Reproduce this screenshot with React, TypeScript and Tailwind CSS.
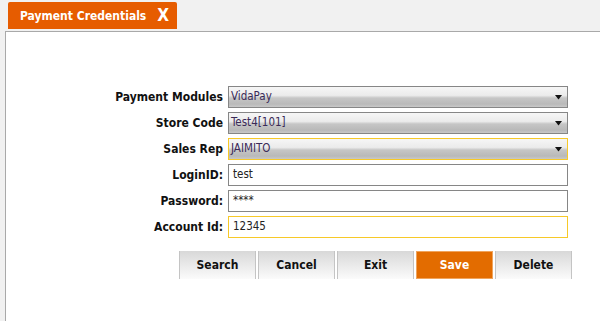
import React from 'react';

const font = { fontFamily: '"DejaVu Sans Condensed", "DejaVu Sans", Verdana, sans-serif' };

type Field = {
  label: string;
  value: string;
  kind: 'select' | 'input';
  active?: boolean;
};

const fields: Field[] = [
  { label: 'Payment Modules', value: 'VidaPay', kind: 'select' },
  { label: 'Store Code', value: 'Test4[101]', kind: 'select' },
  { label: 'Sales Rep', value: 'JAIMITO', kind: 'select', active: true },
  { label: 'LoginID:', value: 'test', kind: 'input' },
  { label: 'Password:', value: '****', kind: 'input' },
  { label: 'Account Id:', value: '12345', kind: 'input', active: true },
];

const buttons = ['Search', 'Cancel', 'Exit', 'Save', 'Delete'];

function SelectBox({ value, active }: { value: string; active?: boolean }) {
  return (
    <div
      className={`h-[22px] flex items-center justify-between pl-[2px] pr-[4px] border bg-[linear-gradient(to_bottom,#f6f6f6_0%,#ebebeb_42%,#c6c6c6_55%,#b9b9b9_85%,#c8c8c8_100%)] ${
        active ? 'border-[#f7c928]' : 'border-[#868686]'
      }`}
    >
      <span className="text-[11.5px] text-[#3a2a58]">{value}</span>
      <svg width="7" height="5" viewBox="0 0 7 5" className="mr-[1px]">
        <path d="M0 0 H7 L3.5 4.5 Z" fill="#111" />
      </svg>
    </div>
  );
}

function TextBox({ value, active }: { value: string; active?: boolean }) {
  return (
    <div
      className={`h-[22px] flex items-center pl-[4px] border bg-white ${
        active ? 'border-[#f7c928]' : 'border-[#868686]'
      }`}
    >
      <span className="text-[11.5px] text-[#222]">{value}</span>
    </div>
  );
}

export default function App() {
  return (
    <div className="w-[600px] h-[321px] bg-[#f1f1f1] flex flex-col overflow-hidden" style={font}>
      <div className="h-[31px] pl-[8px] pt-[2px] flex">
        <div className="h-[27px] w-[169px] bg-[#e65c00] rounded-t-[2px] flex items-center pl-[12px] gap-[11px] whitespace-nowrap">
          <span className="text-[12px] font-bold text-white">Payment Credentials</span>
          <span className="text-[17px] font-bold text-white leading-none">X</span>
        </div>
      </div>
      <div className="flex-1 ml-[5px] border-l border-t border-[#a9a9a9] bg-white pt-[54px]">
        <div className="grid grid-cols-[217px_340px] gap-x-[5px] gap-y-[4px]">
          {fields.map((f) => (
            <React.Fragment key={f.label}>
              <div className="h-[22px] flex items-center justify-end text-[12px] font-bold text-[#111]">
                {f.label}
              </div>
              {f.kind === 'select' ? (
                <SelectBox value={f.value} active={f.active} />
              ) : (
                <TextBox value={f.value} active={f.active} />
              )}
            </React.Fragment>
          ))}
        </div>
        <div className="flex gap-[2px] ml-[173px] mt-[13px]">
          {buttons.map((b) =>
            b === 'Save' ? (
              <div
                key={b}
                className="w-[77px] h-[28px] flex items-center justify-center bg-[#e36c00] border border-[#f0a45c] text-[12px] font-bold text-white"
              >
                {b}
              </div>
            ) : (
              <div
                key={b}
                className="w-[77px] h-[28px] flex items-center justify-center border-l border-r border-[#c4c4c4] bg-[linear-gradient(to_bottom,#d8d8d8,#fbfbfb)] text-[12px] font-bold text-[#111]"
              >
                {b}
              </div>
            )
          )}
        </div>
      </div>
    </div>
  );
}
